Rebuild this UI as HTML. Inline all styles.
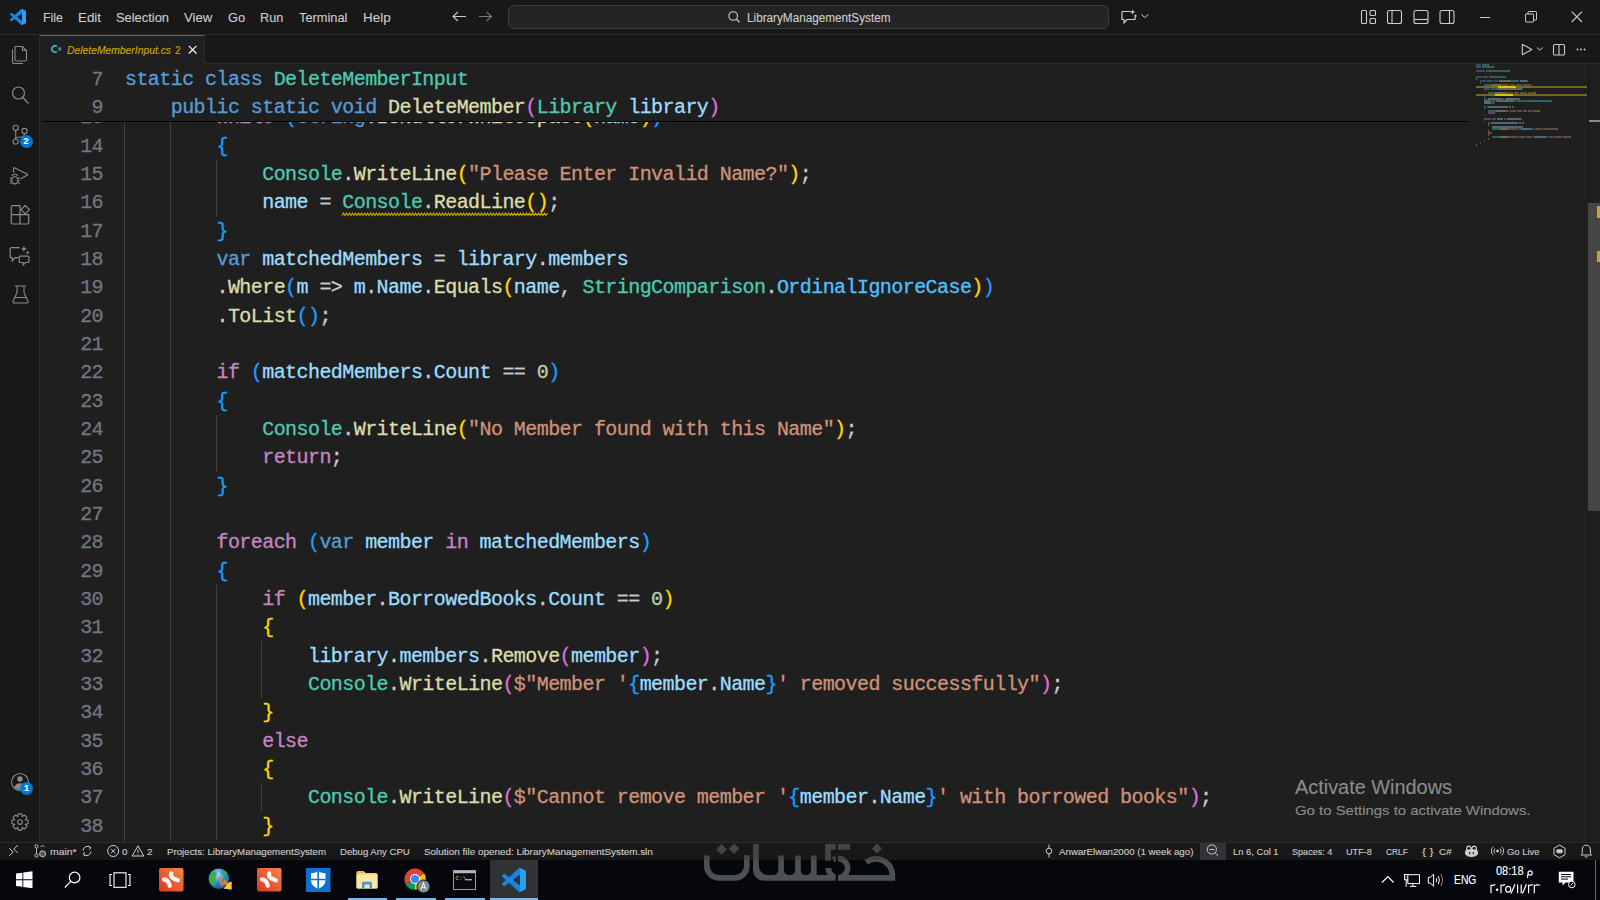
<!DOCTYPE html>
<html><head><meta charset="utf-8">
<style>
*{margin:0;padding:0;box-sizing:border-box}
html,body{width:1600px;height:900px;overflow:hidden;background:#1f1f1f}
body{position:relative;font-family:"Liberation Sans",sans-serif;color:#cccccc}
.a{position:absolute}
#editor{left:40px;top:64px;width:1560px;height:778px;background:#1f1f1f}
.code{font-family:"Liberation Mono",monospace;font-size:20px;letter-spacing:-0.565px;line-height:28.333px;white-space:pre;-webkit-text-stroke:0.32px currentColor}
.ln{font-family:"Liberation Mono",monospace;font-size:20px;letter-spacing:-0.565px;line-height:28.333px;color:#6e7681;text-align:right;width:60px;-webkit-text-stroke:0.32px currentColor}
.k{color:#569cd6}.c{color:#c586c0}.t{color:#4ec9b0}.f{color:#dcdcaa}.v{color:#9cdcfe}.s{color:#ce9178}.n{color:#b5cea8}.p{color:#cccccc}.e{color:#4fc1ff}
.b1{color:#ffd700}.b2{color:#da70d6}.b3{color:#179fff}
.guide{width:1px;background:#404040}
.ui{font-family:"Liberation Sans",sans-serif;white-space:pre;-webkit-text-stroke:0.12px currentColor}
svg{position:absolute;overflow:visible}
</style></head><body>
<div class="a" style="left:40px;top:64px;width:1560px;height:778px;background:#1f1f1f"></div>
<div class="a guide" style="left:124.00px;top:103.00px;height:28.73px;background:#404040"></div>
<div class="a guide" style="left:170.00px;top:103.00px;height:28.73px;background:#404040"></div>
<div class="a guide" style="left:124.00px;top:131.33px;height:28.73px;background:#404040"></div>
<div class="a guide" style="left:170.00px;top:131.33px;height:28.73px;background:#404040"></div>
<div class="a guide" style="left:124.00px;top:159.66px;height:28.73px;background:#404040"></div>
<div class="a guide" style="left:170.00px;top:159.66px;height:28.73px;background:#404040"></div>
<div class="a guide" style="left:216.00px;top:159.66px;height:28.73px;background:#404040"></div>
<div class="a guide" style="left:124.00px;top:188.00px;height:28.73px;background:#404040"></div>
<div class="a guide" style="left:170.00px;top:188.00px;height:28.73px;background:#404040"></div>
<div class="a guide" style="left:216.00px;top:188.00px;height:28.73px;background:#404040"></div>
<div class="a guide" style="left:124.00px;top:216.33px;height:28.73px;background:#404040"></div>
<div class="a guide" style="left:170.00px;top:216.33px;height:28.73px;background:#404040"></div>
<div class="a guide" style="left:124.00px;top:244.66px;height:28.73px;background:#404040"></div>
<div class="a guide" style="left:170.00px;top:244.66px;height:28.73px;background:#404040"></div>
<div class="a guide" style="left:124.00px;top:273.00px;height:28.73px;background:#404040"></div>
<div class="a guide" style="left:170.00px;top:273.00px;height:28.73px;background:#404040"></div>
<div class="a guide" style="left:124.00px;top:301.33px;height:28.73px;background:#404040"></div>
<div class="a guide" style="left:170.00px;top:301.33px;height:28.73px;background:#404040"></div>
<div class="a guide" style="left:124.00px;top:329.66px;height:28.73px;background:#404040"></div>
<div class="a guide" style="left:170.00px;top:329.66px;height:28.73px;background:#404040"></div>
<div class="a guide" style="left:124.00px;top:358.00px;height:28.73px;background:#404040"></div>
<div class="a guide" style="left:170.00px;top:358.00px;height:28.73px;background:#404040"></div>
<div class="a guide" style="left:124.00px;top:386.33px;height:28.73px;background:#404040"></div>
<div class="a guide" style="left:170.00px;top:386.33px;height:28.73px;background:#404040"></div>
<div class="a guide" style="left:124.00px;top:414.66px;height:28.73px;background:#404040"></div>
<div class="a guide" style="left:170.00px;top:414.66px;height:28.73px;background:#404040"></div>
<div class="a guide" style="left:216.00px;top:414.66px;height:28.73px;background:#404040"></div>
<div class="a guide" style="left:124.00px;top:443.00px;height:28.73px;background:#404040"></div>
<div class="a guide" style="left:170.00px;top:443.00px;height:28.73px;background:#404040"></div>
<div class="a guide" style="left:216.00px;top:443.00px;height:28.73px;background:#404040"></div>
<div class="a guide" style="left:124.00px;top:471.33px;height:28.73px;background:#404040"></div>
<div class="a guide" style="left:170.00px;top:471.33px;height:28.73px;background:#404040"></div>
<div class="a guide" style="left:124.00px;top:499.66px;height:28.73px;background:#404040"></div>
<div class="a guide" style="left:170.00px;top:499.66px;height:28.73px;background:#404040"></div>
<div class="a guide" style="left:124.00px;top:528.00px;height:28.73px;background:#404040"></div>
<div class="a guide" style="left:170.00px;top:528.00px;height:28.73px;background:#404040"></div>
<div class="a guide" style="left:124.00px;top:556.33px;height:28.73px;background:#404040"></div>
<div class="a guide" style="left:170.00px;top:556.33px;height:28.73px;background:#404040"></div>
<div class="a guide" style="left:124.00px;top:584.66px;height:28.73px;background:#404040"></div>
<div class="a guide" style="left:170.00px;top:584.66px;height:28.73px;background:#404040"></div>
<div class="a guide" style="left:216.00px;top:584.66px;height:28.73px;background:#404040"></div>
<div class="a guide" style="left:124.00px;top:613.00px;height:28.73px;background:#404040"></div>
<div class="a guide" style="left:170.00px;top:613.00px;height:28.73px;background:#404040"></div>
<div class="a guide" style="left:216.00px;top:613.00px;height:28.73px;background:#404040"></div>
<div class="a guide" style="left:124.00px;top:641.33px;height:28.73px;background:#404040"></div>
<div class="a guide" style="left:170.00px;top:641.33px;height:28.73px;background:#404040"></div>
<div class="a guide" style="left:216.00px;top:641.33px;height:28.73px;background:#404040"></div>
<div class="a guide" style="left:261.00px;top:641.33px;height:28.73px;background:#404040"></div>
<div class="a guide" style="left:124.00px;top:669.66px;height:28.73px;background:#404040"></div>
<div class="a guide" style="left:170.00px;top:669.66px;height:28.73px;background:#404040"></div>
<div class="a guide" style="left:216.00px;top:669.66px;height:28.73px;background:#404040"></div>
<div class="a guide" style="left:261.00px;top:669.66px;height:28.73px;background:#404040"></div>
<div class="a guide" style="left:124.00px;top:698.00px;height:28.73px;background:#404040"></div>
<div class="a guide" style="left:170.00px;top:698.00px;height:28.73px;background:#404040"></div>
<div class="a guide" style="left:216.00px;top:698.00px;height:28.73px;background:#404040"></div>
<div class="a guide" style="left:124.00px;top:726.33px;height:28.73px;background:#404040"></div>
<div class="a guide" style="left:170.00px;top:726.33px;height:28.73px;background:#404040"></div>
<div class="a guide" style="left:216.00px;top:726.33px;height:28.73px;background:#404040"></div>
<div class="a guide" style="left:124.00px;top:754.66px;height:28.73px;background:#404040"></div>
<div class="a guide" style="left:170.00px;top:754.66px;height:28.73px;background:#404040"></div>
<div class="a guide" style="left:216.00px;top:754.66px;height:28.73px;background:#404040"></div>
<div class="a guide" style="left:124.00px;top:783.00px;height:28.73px;background:#404040"></div>
<div class="a guide" style="left:170.00px;top:783.00px;height:28.73px;background:#404040"></div>
<div class="a guide" style="left:216.00px;top:783.00px;height:28.73px;background:#404040"></div>
<div class="a guide" style="left:261.00px;top:783.00px;height:28.73px;background:#404040"></div>
<div class="a guide" style="left:124.00px;top:811.33px;height:28.73px;background:#404040"></div>
<div class="a guide" style="left:170.00px;top:811.33px;height:28.73px;background:#404040"></div>
<div class="a guide" style="left:216.00px;top:811.33px;height:28.73px;background:#404040"></div>
<div class="a guide" style="left:124.00px;top:839.66px;height:28.73px;background:#404040"></div>
<div class="a guide" style="left:170.00px;top:839.66px;height:28.73px;background:#404040"></div>
<div class="a code" style="left:216.48px;top:104.30px"><span class="c">while</span><span class="p"> </span><span class="b3">(</span><span class="k">string</span><span class="p">.</span><span class="f">IsNullOrWhiteSpace</span><span class="b1">(</span><span class="v">name</span><span class="b1">)</span><span class="b3">)</span></div>
<div class="a ln" style="left:43px;top:104.30px">13</div>
<div class="a code" style="left:216.48px;top:132.63px"><span class="b3">{</span></div>
<div class="a ln" style="left:43px;top:132.63px">14</div>
<div class="a code" style="left:262.22px;top:160.96px"><span class="t">Console</span><span class="p">.</span><span class="f">WriteLine</span><span class="b1">(</span><span class="s">"Please Enter Invalid Name?"</span><span class="b1">)</span><span class="p">;</span></div>
<div class="a ln" style="left:43px;top:160.96px">15</div>
<div class="a code" style="left:262.22px;top:189.30px"><span class="v">name</span><span class="p"> = </span><span class="t">Console</span><span class="p">.</span><span class="f">ReadLine</span><span class="b1">()</span><span class="p">;</span></div>
<div class="a ln" style="left:43px;top:189.30px">16</div>
<div class="a code" style="left:216.48px;top:217.63px"><span class="b3">}</span></div>
<div class="a ln" style="left:43px;top:217.63px">17</div>
<div class="a code" style="left:216.48px;top:245.96px"><span class="k">var</span><span class="p"> </span><span class="v">matchedMembers</span><span class="p"> = </span><span class="v">library</span><span class="p">.</span><span class="v">members</span></div>
<div class="a ln" style="left:43px;top:245.96px">18</div>
<div class="a code" style="left:216.48px;top:274.30px"><span class="p">.</span><span class="f">Where</span><span class="b3">(</span><span class="v">m</span><span class="p"> =&gt; </span><span class="v">m</span><span class="p">.</span><span class="v">Name</span><span class="p">.</span><span class="f">Equals</span><span class="b1">(</span><span class="v">name</span><span class="p">, </span><span class="t">StringComparison</span><span class="p">.</span><span class="e">OrdinalIgnoreCase</span><span class="b1">)</span><span class="b3">)</span></div>
<div class="a ln" style="left:43px;top:274.30px">19</div>
<div class="a code" style="left:216.48px;top:302.63px"><span class="p">.</span><span class="f">ToList</span><span class="b3">()</span><span class="p">;</span></div>
<div class="a ln" style="left:43px;top:302.63px">20</div>
<div class="a code" style="left:216.48px;top:330.96px"></div>
<div class="a ln" style="left:43px;top:330.96px">21</div>
<div class="a code" style="left:216.48px;top:359.30px"><span class="c">if</span><span class="p"> </span><span class="b3">(</span><span class="v">matchedMembers</span><span class="p">.</span><span class="v">Count</span><span class="p"> == </span><span class="n">0</span><span class="b3">)</span></div>
<div class="a ln" style="left:43px;top:359.30px">22</div>
<div class="a code" style="left:216.48px;top:387.63px"><span class="b3">{</span></div>
<div class="a ln" style="left:43px;top:387.63px">23</div>
<div class="a code" style="left:262.22px;top:415.96px"><span class="t">Console</span><span class="p">.</span><span class="f">WriteLine</span><span class="b1">(</span><span class="s">"No Member found with this Name"</span><span class="b1">)</span><span class="p">;</span></div>
<div class="a ln" style="left:43px;top:415.96px">24</div>
<div class="a code" style="left:262.22px;top:444.30px"><span class="c">return</span><span class="p">;</span></div>
<div class="a ln" style="left:43px;top:444.30px">25</div>
<div class="a code" style="left:216.48px;top:472.63px"><span class="b3">}</span></div>
<div class="a ln" style="left:43px;top:472.63px">26</div>
<div class="a code" style="left:216.48px;top:500.96px"></div>
<div class="a ln" style="left:43px;top:500.96px">27</div>
<div class="a code" style="left:216.48px;top:529.30px"><span class="c">foreach</span><span class="p"> </span><span class="b3">(</span><span class="k">var</span><span class="p"> </span><span class="v">member</span><span class="p"> </span><span class="c">in</span><span class="p"> </span><span class="v">matchedMembers</span><span class="b3">)</span></div>
<div class="a ln" style="left:43px;top:529.30px">28</div>
<div class="a code" style="left:216.48px;top:557.63px"><span class="b3">{</span></div>
<div class="a ln" style="left:43px;top:557.63px">29</div>
<div class="a code" style="left:262.22px;top:585.96px"><span class="c">if</span><span class="p"> </span><span class="b1">(</span><span class="v">member</span><span class="p">.</span><span class="v">BorrowedBooks</span><span class="p">.</span><span class="v">Count</span><span class="p"> == </span><span class="n">0</span><span class="b1">)</span></div>
<div class="a ln" style="left:43px;top:585.96px">30</div>
<div class="a code" style="left:262.22px;top:614.30px"><span class="b1">{</span></div>
<div class="a ln" style="left:43px;top:614.30px">31</div>
<div class="a code" style="left:307.96px;top:642.63px"><span class="v">library</span><span class="p">.</span><span class="v">members</span><span class="p">.</span><span class="f">Remove</span><span class="b2">(</span><span class="v">member</span><span class="b2">)</span><span class="p">;</span></div>
<div class="a ln" style="left:43px;top:642.63px">32</div>
<div class="a code" style="left:307.96px;top:670.96px"><span class="t">Console</span><span class="p">.</span><span class="f">WriteLine</span><span class="b2">(</span><span class="s">$"Member '</span><span class="b3">{</span><span class="v">member</span><span class="p">.</span><span class="v">Name</span><span class="b3">}</span><span class="s">' removed successfully"</span><span class="b2">)</span><span class="p">;</span></div>
<div class="a ln" style="left:43px;top:670.96px">33</div>
<div class="a code" style="left:262.22px;top:699.30px"><span class="b1">}</span></div>
<div class="a ln" style="left:43px;top:699.30px">34</div>
<div class="a code" style="left:262.22px;top:727.63px"><span class="c">else</span></div>
<div class="a ln" style="left:43px;top:727.63px">35</div>
<div class="a code" style="left:262.22px;top:755.96px"><span class="b1">{</span></div>
<div class="a ln" style="left:43px;top:755.96px">36</div>
<div class="a code" style="left:307.96px;top:784.30px"><span class="t">Console</span><span class="p">.</span><span class="f">WriteLine</span><span class="b2">(</span><span class="s">$"Cannot remove member '</span><span class="b3">{</span><span class="v">member</span><span class="p">.</span><span class="v">Name</span><span class="b3">}</span><span class="s">' with borrowed books"</span><span class="b2">)</span><span class="p">;</span></div>
<div class="a ln" style="left:43px;top:784.30px">37</div>
<div class="a code" style="left:262.22px;top:812.63px"><span class="b1">}</span></div>
<div class="a ln" style="left:43px;top:812.63px">38</div>
<div class="a code" style="left:216.48px;top:840.96px"><span class="b3">}</span></div>
<div class="a ln" style="left:43px;top:840.96px">39</div>
<svg style="left:341.5px;top:211.80px" width="206" height="5"><path d="M0 3.5 L1.5 1 L3.0 3.5 L4.5 1 L6.0 3.5 L7.5 1 L9.0 3.5 L10.5 1 L12.0 3.5 L13.5 1 L15.0 3.5 L16.5 1 L18.0 3.5 L19.5 1 L21.0 3.5 L22.5 1 L24.0 3.5 L25.5 1 L27.0 3.5 L28.5 1 L30.0 3.5 L31.5 1 L33.0 3.5 L34.5 1 L36.0 3.5 L37.5 1 L39.0 3.5 L40.5 1 L42.0 3.5 L43.5 1 L45.0 3.5 L46.5 1 L48.0 3.5 L49.5 1 L51.0 3.5 L52.5 1 L54.0 3.5 L55.5 1 L57.0 3.5 L58.5 1 L60.0 3.5 L61.5 1 L63.0 3.5 L64.5 1 L66.0 3.5 L67.5 1 L69.0 3.5 L70.5 1 L72.0 3.5 L73.5 1 L75.0 3.5 L76.5 1 L78.0 3.5 L79.5 1 L81.0 3.5 L82.5 1 L84.0 3.5 L85.5 1 L87.0 3.5 L88.5 1 L90.0 3.5 L91.5 1 L93.0 3.5 L94.5 1 L96.0 3.5 L97.5 1 L99.0 3.5 L100.5 1 L102.0 3.5 L103.5 1 L105.0 3.5 L106.5 1 L108.0 3.5 L109.5 1 L111.0 3.5 L112.5 1 L114.0 3.5 L115.5 1 L117.0 3.5 L118.5 1 L120.0 3.5 L121.5 1 L123.0 3.5 L124.5 1 L126.0 3.5 L127.5 1 L129.0 3.5 L130.5 1 L132.0 3.5 L133.5 1 L135.0 3.5 L136.5 1 L138.0 3.5 L139.5 1 L141.0 3.5 L142.5 1 L144.0 3.5 L145.5 1 L147.0 3.5 L148.5 1 L150.0 3.5 L151.5 1 L153.0 3.5 L154.5 1 L156.0 3.5 L157.5 1 L159.0 3.5 L160.5 1 L162.0 3.5 L163.5 1 L165.0 3.5 L166.5 1 L168.0 3.5 L169.5 1 L171.0 3.5 L172.5 1 L174.0 3.5 L175.5 1 L177.0 3.5 L178.5 1 L180.0 3.5 L181.5 1 L183.0 3.5 L184.5 1 L186.0 3.5 L187.5 1 L189.0 3.5 L190.5 1 L192.0 3.5 L193.5 1 L195.0 3.5 L196.5 1 L198.0 3.5 L199.5 1 L201.0 3.5 L202.5 1 L204.0 3.5 L205.5 1" fill="none" stroke="#cca700" stroke-width="1.1"/></svg>
<div class="a" style="left:40px;top:64px;width:1436px;height:56.67px;background:#1f1f1f"></div>
<div class="a code" style="left:125px;top:66.10px"><span class="k">static</span> <span class="k">class</span> <span class="t">DeleteMemberInput</span></div>
<div class="a ln" style="left:43px;top:66.10px">7</div>
<div class="a code" style="left:170.74px;top:93.63px"><span class="k">public</span> <span class="k">static</span> <span class="k">void</span> <span class="f">DeleteMember</span><span class="b2">(</span><span class="t">Library</span> <span class="v">library</span><span class="b2">)</span></div>
<div class="a ln" style="left:43px;top:93.63px">9</div>
<div class="a" style="left:42px;top:120.67px;width:1426px;height:1.6px;background:#000"></div>
<div class="a" style="left:1476px;top:64.3px;width:5px;height:1.4px;background:#569cd6;opacity:0.38"></div>
<div class="a" style="left:1482px;top:64.3px;width:6px;height:1.4px;background:#4ec9b0;opacity:0.38"></div>
<div class="a" style="left:1488px;top:64.3px;width:1px;height:1.4px;background:#cccccc;opacity:0.38"></div>
<div class="a" style="left:1476px;top:66.3px;width:5px;height:1.4px;background:#569cd6;opacity:0.38"></div>
<div class="a" style="left:1482px;top:66.3px;width:6px;height:1.4px;background:#4ec9b0;opacity:0.38"></div>
<div class="a" style="left:1488px;top:66.3px;width:1px;height:1.4px;background:#cccccc;opacity:0.38"></div>
<div class="a" style="left:1489px;top:66.3px;width:4px;height:1.4px;background:#4ec9b0;opacity:0.38"></div>
<div class="a" style="left:1493px;top:66.3px;width:1px;height:1.4px;background:#cccccc;opacity:0.38"></div>
<div class="a" style="left:1476px;top:70.3px;width:9px;height:1.4px;background:#569cd6;opacity:0.38"></div>
<div class="a" style="left:1486px;top:70.3px;width:23px;height:1.4px;background:#4ec9b0;opacity:0.38"></div>
<div class="a" style="left:1509px;top:70.3px;width:1px;height:1.4px;background:#cccccc;opacity:0.38"></div>
<div class="a" style="left:1476px;top:76.3px;width:6px;height:1.4px;background:#569cd6;opacity:0.38"></div>
<div class="a" style="left:1483px;top:76.3px;width:5px;height:1.4px;background:#569cd6;opacity:0.38"></div>
<div class="a" style="left:1489px;top:76.3px;width:17px;height:1.4px;background:#4ec9b0;opacity:0.38"></div>
<div class="a" style="left:1476px;top:78.3px;width:1px;height:1.4px;background:#ffd700;opacity:0.38"></div>
<div class="a" style="left:1480px;top:80.3px;width:6px;height:1.4px;background:#569cd6;opacity:0.38"></div>
<div class="a" style="left:1487px;top:80.3px;width:6px;height:1.4px;background:#569cd6;opacity:0.38"></div>
<div class="a" style="left:1494px;top:80.3px;width:4px;height:1.4px;background:#569cd6;opacity:0.38"></div>
<div class="a" style="left:1499px;top:80.3px;width:12px;height:1.4px;background:#dcdcaa;opacity:0.38"></div>
<div class="a" style="left:1511px;top:80.3px;width:1px;height:1.4px;background:#da70d6;opacity:0.38"></div>
<div class="a" style="left:1512px;top:80.3px;width:7px;height:1.4px;background:#4ec9b0;opacity:0.38"></div>
<div class="a" style="left:1520px;top:80.3px;width:7px;height:1.4px;background:#9cdcfe;opacity:0.38"></div>
<div class="a" style="left:1527px;top:80.3px;width:1px;height:1.4px;background:#da70d6;opacity:0.38"></div>
<div class="a" style="left:1480px;top:82.3px;width:1px;height:1.4px;background:#da70d6;opacity:0.38"></div>
<div class="a" style="left:1484px;top:84.3px;width:7px;height:1.4px;background:#4ec9b0;opacity:0.38"></div>
<div class="a" style="left:1491px;top:84.3px;width:1px;height:1.4px;background:#cccccc;opacity:0.38"></div>
<div class="a" style="left:1492px;top:84.3px;width:9px;height:1.4px;background:#dcdcaa;opacity:0.38"></div>
<div class="a" style="left:1501px;top:84.3px;width:1px;height:1.4px;background:#179fff;opacity:0.38"></div>
<div class="a" style="left:1502px;top:84.3px;width:7px;height:1.4px;background:#ce9178;opacity:0.38"></div>
<div class="a" style="left:1510px;top:84.3px;width:5px;height:1.4px;background:#ce9178;opacity:0.38"></div>
<div class="a" style="left:1516px;top:84.3px;width:6px;height:1.4px;background:#ce9178;opacity:0.38"></div>
<div class="a" style="left:1523px;top:84.3px;width:6px;height:1.4px;background:#ce9178;opacity:0.38"></div>
<div class="a" style="left:1529px;top:84.3px;width:1px;height:1.4px;background:#179fff;opacity:0.38"></div>
<div class="a" style="left:1530px;top:84.3px;width:1px;height:1.4px;background:#cccccc;opacity:0.38"></div>
<div class="a" style="left:1484px;top:86.3px;width:6px;height:1.4px;background:#569cd6;opacity:0.38"></div>
<div class="a" style="left:1491px;top:86.3px;width:4px;height:1.4px;background:#9cdcfe;opacity:0.38"></div>
<div class="a" style="left:1496px;top:86.3px;width:1px;height:1.4px;background:#cccccc;opacity:0.38"></div>
<div class="a" style="left:1498px;top:86.3px;width:7px;height:1.4px;background:#4ec9b0;opacity:0.38"></div>
<div class="a" style="left:1505px;top:86.3px;width:1px;height:1.4px;background:#cccccc;opacity:0.38"></div>
<div class="a" style="left:1506px;top:86.3px;width:8px;height:1.4px;background:#dcdcaa;opacity:0.38"></div>
<div class="a" style="left:1514px;top:86.3px;width:2px;height:1.4px;background:#179fff;opacity:0.38"></div>
<div class="a" style="left:1516px;top:86.3px;width:1px;height:1.4px;background:#cccccc;opacity:0.38"></div>
<div class="a" style="left:1484px;top:88.3px;width:5px;height:1.4px;background:#c586c0;opacity:0.38"></div>
<div class="a" style="left:1490px;top:88.3px;width:1px;height:1.4px;background:#179fff;opacity:0.38"></div>
<div class="a" style="left:1491px;top:88.3px;width:6px;height:1.4px;background:#569cd6;opacity:0.38"></div>
<div class="a" style="left:1497px;top:88.3px;width:1px;height:1.4px;background:#cccccc;opacity:0.38"></div>
<div class="a" style="left:1498px;top:88.3px;width:18px;height:1.4px;background:#dcdcaa;opacity:0.38"></div>
<div class="a" style="left:1516px;top:88.3px;width:1px;height:1.4px;background:#ffd700;opacity:0.38"></div>
<div class="a" style="left:1517px;top:88.3px;width:4px;height:1.4px;background:#9cdcfe;opacity:0.38"></div>
<div class="a" style="left:1521px;top:88.3px;width:1px;height:1.4px;background:#ffd700;opacity:0.38"></div>
<div class="a" style="left:1522px;top:88.3px;width:1px;height:1.4px;background:#179fff;opacity:0.38"></div>
<div class="a" style="left:1484px;top:90.3px;width:1px;height:1.4px;background:#179fff;opacity:0.38"></div>
<div class="a" style="left:1488px;top:92.3px;width:7px;height:1.4px;background:#4ec9b0;opacity:0.38"></div>
<div class="a" style="left:1495px;top:92.3px;width:1px;height:1.4px;background:#cccccc;opacity:0.38"></div>
<div class="a" style="left:1496px;top:92.3px;width:9px;height:1.4px;background:#dcdcaa;opacity:0.38"></div>
<div class="a" style="left:1505px;top:92.3px;width:1px;height:1.4px;background:#ffd700;opacity:0.38"></div>
<div class="a" style="left:1506px;top:92.3px;width:7px;height:1.4px;background:#ce9178;opacity:0.38"></div>
<div class="a" style="left:1514px;top:92.3px;width:5px;height:1.4px;background:#ce9178;opacity:0.38"></div>
<div class="a" style="left:1520px;top:92.3px;width:7px;height:1.4px;background:#ce9178;opacity:0.38"></div>
<div class="a" style="left:1528px;top:92.3px;width:6px;height:1.4px;background:#ce9178;opacity:0.38"></div>
<div class="a" style="left:1534px;top:92.3px;width:1px;height:1.4px;background:#ffd700;opacity:0.38"></div>
<div class="a" style="left:1535px;top:92.3px;width:1px;height:1.4px;background:#cccccc;opacity:0.38"></div>
<div class="a" style="left:1488px;top:94.3px;width:4px;height:1.4px;background:#9cdcfe;opacity:0.38"></div>
<div class="a" style="left:1493px;top:94.3px;width:1px;height:1.4px;background:#cccccc;opacity:0.38"></div>
<div class="a" style="left:1495px;top:94.3px;width:7px;height:1.4px;background:#4ec9b0;opacity:0.38"></div>
<div class="a" style="left:1502px;top:94.3px;width:1px;height:1.4px;background:#cccccc;opacity:0.38"></div>
<div class="a" style="left:1503px;top:94.3px;width:8px;height:1.4px;background:#dcdcaa;opacity:0.38"></div>
<div class="a" style="left:1511px;top:94.3px;width:2px;height:1.4px;background:#ffd700;opacity:0.38"></div>
<div class="a" style="left:1513px;top:94.3px;width:1px;height:1.4px;background:#cccccc;opacity:0.38"></div>
<div class="a" style="left:1484px;top:96.3px;width:1px;height:1.4px;background:#179fff;opacity:0.38"></div>
<div class="a" style="left:1484px;top:98.3px;width:3px;height:1.4px;background:#569cd6;opacity:0.38"></div>
<div class="a" style="left:1488px;top:98.3px;width:14px;height:1.4px;background:#9cdcfe;opacity:0.38"></div>
<div class="a" style="left:1503px;top:98.3px;width:1px;height:1.4px;background:#cccccc;opacity:0.38"></div>
<div class="a" style="left:1505px;top:98.3px;width:7px;height:1.4px;background:#9cdcfe;opacity:0.38"></div>
<div class="a" style="left:1512px;top:98.3px;width:1px;height:1.4px;background:#cccccc;opacity:0.38"></div>
<div class="a" style="left:1513px;top:98.3px;width:7px;height:1.4px;background:#9cdcfe;opacity:0.38"></div>
<div class="a" style="left:1484px;top:100.3px;width:1px;height:1.4px;background:#cccccc;opacity:0.38"></div>
<div class="a" style="left:1485px;top:100.3px;width:5px;height:1.4px;background:#dcdcaa;opacity:0.38"></div>
<div class="a" style="left:1490px;top:100.3px;width:1px;height:1.4px;background:#179fff;opacity:0.38"></div>
<div class="a" style="left:1491px;top:100.3px;width:1px;height:1.4px;background:#9cdcfe;opacity:0.38"></div>
<div class="a" style="left:1493px;top:100.3px;width:2px;height:1.4px;background:#cccccc;opacity:0.38"></div>
<div class="a" style="left:1496px;top:100.3px;width:1px;height:1.4px;background:#9cdcfe;opacity:0.38"></div>
<div class="a" style="left:1497px;top:100.3px;width:1px;height:1.4px;background:#cccccc;opacity:0.38"></div>
<div class="a" style="left:1498px;top:100.3px;width:4px;height:1.4px;background:#9cdcfe;opacity:0.38"></div>
<div class="a" style="left:1502px;top:100.3px;width:1px;height:1.4px;background:#cccccc;opacity:0.38"></div>
<div class="a" style="left:1503px;top:100.3px;width:6px;height:1.4px;background:#dcdcaa;opacity:0.38"></div>
<div class="a" style="left:1509px;top:100.3px;width:1px;height:1.4px;background:#ffd700;opacity:0.38"></div>
<div class="a" style="left:1510px;top:100.3px;width:4px;height:1.4px;background:#9cdcfe;opacity:0.38"></div>
<div class="a" style="left:1514px;top:100.3px;width:1px;height:1.4px;background:#cccccc;opacity:0.38"></div>
<div class="a" style="left:1516px;top:100.3px;width:16px;height:1.4px;background:#4ec9b0;opacity:0.38"></div>
<div class="a" style="left:1532px;top:100.3px;width:1px;height:1.4px;background:#cccccc;opacity:0.38"></div>
<div class="a" style="left:1533px;top:100.3px;width:17px;height:1.4px;background:#4fc1ff;opacity:0.38"></div>
<div class="a" style="left:1550px;top:100.3px;width:1px;height:1.4px;background:#ffd700;opacity:0.38"></div>
<div class="a" style="left:1551px;top:100.3px;width:1px;height:1.4px;background:#179fff;opacity:0.38"></div>
<div class="a" style="left:1484px;top:102.3px;width:1px;height:1.4px;background:#cccccc;opacity:0.38"></div>
<div class="a" style="left:1485px;top:102.3px;width:6px;height:1.4px;background:#dcdcaa;opacity:0.38"></div>
<div class="a" style="left:1491px;top:102.3px;width:2px;height:1.4px;background:#179fff;opacity:0.38"></div>
<div class="a" style="left:1493px;top:102.3px;width:1px;height:1.4px;background:#cccccc;opacity:0.38"></div>
<div class="a" style="left:1484px;top:106.3px;width:2px;height:1.4px;background:#c586c0;opacity:0.38"></div>
<div class="a" style="left:1487px;top:106.3px;width:1px;height:1.4px;background:#179fff;opacity:0.38"></div>
<div class="a" style="left:1488px;top:106.3px;width:14px;height:1.4px;background:#9cdcfe;opacity:0.38"></div>
<div class="a" style="left:1502px;top:106.3px;width:1px;height:1.4px;background:#cccccc;opacity:0.38"></div>
<div class="a" style="left:1503px;top:106.3px;width:5px;height:1.4px;background:#9cdcfe;opacity:0.38"></div>
<div class="a" style="left:1509px;top:106.3px;width:2px;height:1.4px;background:#cccccc;opacity:0.38"></div>
<div class="a" style="left:1512px;top:106.3px;width:1px;height:1.4px;background:#b5cea8;opacity:0.38"></div>
<div class="a" style="left:1513px;top:106.3px;width:1px;height:1.4px;background:#179fff;opacity:0.38"></div>
<div class="a" style="left:1484px;top:108.3px;width:1px;height:1.4px;background:#179fff;opacity:0.38"></div>
<div class="a" style="left:1488px;top:110.3px;width:7px;height:1.4px;background:#4ec9b0;opacity:0.38"></div>
<div class="a" style="left:1495px;top:110.3px;width:1px;height:1.4px;background:#cccccc;opacity:0.38"></div>
<div class="a" style="left:1496px;top:110.3px;width:9px;height:1.4px;background:#dcdcaa;opacity:0.38"></div>
<div class="a" style="left:1505px;top:110.3px;width:1px;height:1.4px;background:#ffd700;opacity:0.38"></div>
<div class="a" style="left:1506px;top:110.3px;width:3px;height:1.4px;background:#ce9178;opacity:0.38"></div>
<div class="a" style="left:1510px;top:110.3px;width:6px;height:1.4px;background:#ce9178;opacity:0.38"></div>
<div class="a" style="left:1517px;top:110.3px;width:5px;height:1.4px;background:#ce9178;opacity:0.38"></div>
<div class="a" style="left:1523px;top:110.3px;width:4px;height:1.4px;background:#ce9178;opacity:0.38"></div>
<div class="a" style="left:1528px;top:110.3px;width:4px;height:1.4px;background:#ce9178;opacity:0.38"></div>
<div class="a" style="left:1533px;top:110.3px;width:5px;height:1.4px;background:#ce9178;opacity:0.38"></div>
<div class="a" style="left:1538px;top:110.3px;width:1px;height:1.4px;background:#ffd700;opacity:0.38"></div>
<div class="a" style="left:1539px;top:110.3px;width:1px;height:1.4px;background:#cccccc;opacity:0.38"></div>
<div class="a" style="left:1488px;top:112.3px;width:6px;height:1.4px;background:#c586c0;opacity:0.38"></div>
<div class="a" style="left:1494px;top:112.3px;width:1px;height:1.4px;background:#cccccc;opacity:0.38"></div>
<div class="a" style="left:1484px;top:114.3px;width:1px;height:1.4px;background:#179fff;opacity:0.38"></div>
<div class="a" style="left:1484px;top:118.3px;width:7px;height:1.4px;background:#c586c0;opacity:0.38"></div>
<div class="a" style="left:1492px;top:118.3px;width:1px;height:1.4px;background:#179fff;opacity:0.38"></div>
<div class="a" style="left:1493px;top:118.3px;width:3px;height:1.4px;background:#569cd6;opacity:0.38"></div>
<div class="a" style="left:1497px;top:118.3px;width:6px;height:1.4px;background:#9cdcfe;opacity:0.38"></div>
<div class="a" style="left:1504px;top:118.3px;width:2px;height:1.4px;background:#c586c0;opacity:0.38"></div>
<div class="a" style="left:1507px;top:118.3px;width:14px;height:1.4px;background:#9cdcfe;opacity:0.38"></div>
<div class="a" style="left:1521px;top:118.3px;width:1px;height:1.4px;background:#179fff;opacity:0.38"></div>
<div class="a" style="left:1484px;top:120.3px;width:1px;height:1.4px;background:#179fff;opacity:0.38"></div>
<div class="a" style="left:1488px;top:122.3px;width:2px;height:1.4px;background:#c586c0;opacity:0.38"></div>
<div class="a" style="left:1491px;top:122.3px;width:1px;height:1.4px;background:#ffd700;opacity:0.38"></div>
<div class="a" style="left:1492px;top:122.3px;width:6px;height:1.4px;background:#9cdcfe;opacity:0.38"></div>
<div class="a" style="left:1498px;top:122.3px;width:1px;height:1.4px;background:#cccccc;opacity:0.38"></div>
<div class="a" style="left:1499px;top:122.3px;width:13px;height:1.4px;background:#9cdcfe;opacity:0.38"></div>
<div class="a" style="left:1512px;top:122.3px;width:1px;height:1.4px;background:#cccccc;opacity:0.38"></div>
<div class="a" style="left:1513px;top:122.3px;width:5px;height:1.4px;background:#9cdcfe;opacity:0.38"></div>
<div class="a" style="left:1519px;top:122.3px;width:2px;height:1.4px;background:#cccccc;opacity:0.38"></div>
<div class="a" style="left:1522px;top:122.3px;width:1px;height:1.4px;background:#b5cea8;opacity:0.38"></div>
<div class="a" style="left:1523px;top:122.3px;width:1px;height:1.4px;background:#ffd700;opacity:0.38"></div>
<div class="a" style="left:1488px;top:124.3px;width:1px;height:1.4px;background:#ffd700;opacity:0.38"></div>
<div class="a" style="left:1492px;top:126.3px;width:7px;height:1.4px;background:#9cdcfe;opacity:0.38"></div>
<div class="a" style="left:1499px;top:126.3px;width:1px;height:1.4px;background:#cccccc;opacity:0.38"></div>
<div class="a" style="left:1500px;top:126.3px;width:7px;height:1.4px;background:#9cdcfe;opacity:0.38"></div>
<div class="a" style="left:1507px;top:126.3px;width:1px;height:1.4px;background:#cccccc;opacity:0.38"></div>
<div class="a" style="left:1508px;top:126.3px;width:6px;height:1.4px;background:#dcdcaa;opacity:0.38"></div>
<div class="a" style="left:1514px;top:126.3px;width:1px;height:1.4px;background:#da70d6;opacity:0.38"></div>
<div class="a" style="left:1515px;top:126.3px;width:6px;height:1.4px;background:#9cdcfe;opacity:0.38"></div>
<div class="a" style="left:1521px;top:126.3px;width:1px;height:1.4px;background:#da70d6;opacity:0.38"></div>
<div class="a" style="left:1522px;top:126.3px;width:1px;height:1.4px;background:#cccccc;opacity:0.38"></div>
<div class="a" style="left:1492px;top:128.3px;width:7px;height:1.4px;background:#4ec9b0;opacity:0.38"></div>
<div class="a" style="left:1499px;top:128.3px;width:1px;height:1.4px;background:#cccccc;opacity:0.38"></div>
<div class="a" style="left:1500px;top:128.3px;width:9px;height:1.4px;background:#dcdcaa;opacity:0.38"></div>
<div class="a" style="left:1509px;top:128.3px;width:1px;height:1.4px;background:#da70d6;opacity:0.38"></div>
<div class="a" style="left:1510px;top:128.3px;width:8px;height:1.4px;background:#ce9178;opacity:0.38"></div>
<div class="a" style="left:1519px;top:128.3px;width:1px;height:1.4px;background:#ce9178;opacity:0.38"></div>
<div class="a" style="left:1520px;top:128.3px;width:1px;height:1.4px;background:#179fff;opacity:0.38"></div>
<div class="a" style="left:1521px;top:128.3px;width:6px;height:1.4px;background:#9cdcfe;opacity:0.38"></div>
<div class="a" style="left:1527px;top:128.3px;width:1px;height:1.4px;background:#cccccc;opacity:0.38"></div>
<div class="a" style="left:1528px;top:128.3px;width:4px;height:1.4px;background:#9cdcfe;opacity:0.38"></div>
<div class="a" style="left:1532px;top:128.3px;width:1px;height:1.4px;background:#179fff;opacity:0.38"></div>
<div class="a" style="left:1533px;top:128.3px;width:1px;height:1.4px;background:#ce9178;opacity:0.38"></div>
<div class="a" style="left:1535px;top:128.3px;width:7px;height:1.4px;background:#ce9178;opacity:0.38"></div>
<div class="a" style="left:1543px;top:128.3px;width:13px;height:1.4px;background:#ce9178;opacity:0.38"></div>
<div class="a" style="left:1556px;top:128.3px;width:1px;height:1.4px;background:#da70d6;opacity:0.38"></div>
<div class="a" style="left:1557px;top:128.3px;width:1px;height:1.4px;background:#cccccc;opacity:0.38"></div>
<div class="a" style="left:1488px;top:130.3px;width:1px;height:1.4px;background:#ffd700;opacity:0.38"></div>
<div class="a" style="left:1488px;top:132.3px;width:4px;height:1.4px;background:#c586c0;opacity:0.38"></div>
<div class="a" style="left:1488px;top:134.3px;width:1px;height:1.4px;background:#ffd700;opacity:0.38"></div>
<div class="a" style="left:1492px;top:136.3px;width:7px;height:1.4px;background:#4ec9b0;opacity:0.38"></div>
<div class="a" style="left:1499px;top:136.3px;width:1px;height:1.4px;background:#cccccc;opacity:0.38"></div>
<div class="a" style="left:1500px;top:136.3px;width:9px;height:1.4px;background:#dcdcaa;opacity:0.38"></div>
<div class="a" style="left:1509px;top:136.3px;width:1px;height:1.4px;background:#da70d6;opacity:0.38"></div>
<div class="a" style="left:1510px;top:136.3px;width:8px;height:1.4px;background:#ce9178;opacity:0.38"></div>
<div class="a" style="left:1519px;top:136.3px;width:6px;height:1.4px;background:#ce9178;opacity:0.38"></div>
<div class="a" style="left:1526px;top:136.3px;width:6px;height:1.4px;background:#ce9178;opacity:0.38"></div>
<div class="a" style="left:1533px;top:136.3px;width:1px;height:1.4px;background:#ce9178;opacity:0.38"></div>
<div class="a" style="left:1534px;top:136.3px;width:1px;height:1.4px;background:#179fff;opacity:0.38"></div>
<div class="a" style="left:1535px;top:136.3px;width:6px;height:1.4px;background:#9cdcfe;opacity:0.38"></div>
<div class="a" style="left:1541px;top:136.3px;width:1px;height:1.4px;background:#cccccc;opacity:0.38"></div>
<div class="a" style="left:1542px;top:136.3px;width:4px;height:1.4px;background:#9cdcfe;opacity:0.38"></div>
<div class="a" style="left:1546px;top:136.3px;width:1px;height:1.4px;background:#179fff;opacity:0.38"></div>
<div class="a" style="left:1547px;top:136.3px;width:1px;height:1.4px;background:#ce9178;opacity:0.38"></div>
<div class="a" style="left:1549px;top:136.3px;width:4px;height:1.4px;background:#ce9178;opacity:0.38"></div>
<div class="a" style="left:1554px;top:136.3px;width:8px;height:1.4px;background:#ce9178;opacity:0.38"></div>
<div class="a" style="left:1563px;top:136.3px;width:6px;height:1.4px;background:#ce9178;opacity:0.38"></div>
<div class="a" style="left:1569px;top:136.3px;width:1px;height:1.4px;background:#da70d6;opacity:0.38"></div>
<div class="a" style="left:1570px;top:136.3px;width:1px;height:1.4px;background:#cccccc;opacity:0.38"></div>
<div class="a" style="left:1488px;top:138.3px;width:1px;height:1.4px;background:#ffd700;opacity:0.38"></div>
<div class="a" style="left:1484px;top:140.3px;width:1px;height:1.4px;background:#179fff;opacity:0.38"></div>
<div class="a" style="left:1480px;top:142.3px;width:1px;height:1.4px;background:#da70d6;opacity:0.38"></div>
<div class="a" style="left:1476px;top:144.3px;width:1px;height:1.4px;background:#ffd700;opacity:0.38"></div>
<div class="a" style="left:1476px;top:86px;width:111px;height:2px;background:#7d6a1c;opacity:0.95"></div>
<div class="a" style="left:1498px;top:86px;width:18px;height:2px;background:#e0c000"></div>
<div class="a" style="left:1476px;top:94px;width:111px;height:2px;background:#7d6a1c;opacity:0.95"></div>
<div class="a" style="left:1495px;top:94px;width:18px;height:2px;background:#e0c000"></div>
<div class="a" style="left:1588px;top:64px;width:1px;height:778px;background:#141414"></div>
<div class="a" style="left:1588px;top:203px;width:12px;height:308px;background:#454545"></div>
<div class="a" style="left:1597px;top:206px;width:3px;height:12px;background:#c9a22c"></div>
<div class="a" style="left:1597px;top:251px;width:3px;height:11px;background:#c9a22c"></div>
<div class="a" style="left:1589px;top:120px;width:11px;height:1.5px;background:#8a8a8a"></div>
<div class="a" style="left:0;top:0;width:1600px;height:34px;background:#181818"></div>
<div class="a" style="left:0;top:34px;width:1600px;height:1px;background:#2b2b2b"></div>
<svg style="left:10px;top:9px" width="16" height="16" viewBox="0 0 100 100"><path fill="#1585e6" d="M96.46 10.8L75.86.87a6.23 6.23 0 0 0-7.1 1.2L29.35 38.04 12.19 25.01a4.16 4.16 0 0 0-5.32.24L1.36 30.26a4.16 4.16 0 0 0 0 6.16L16.25 50 1.36 63.58a4.16 4.16 0 0 0 0 6.16l5.5 5.01a4.16 4.16 0 0 0 5.32.24l17.16-13.03 39.41 35.97a6.23 6.23 0 0 0 7.1 1.2l20.6-9.92A6.25 6.25 0 0 0 100 83.6V16.42a6.25 6.25 0 0 0-3.54-5.63zM75.02 72.7L45.11 50l29.91-22.7v45.4z"/><path fill="#26a3ff" d="M75.86.87l20.6 9.93A6.25 6.25 0 0 1 100 16.42V83.6a6.25 6.25 0 0 1-3.54 5.63l-20.6 9.92a6.23 6.23 0 0 1-7.1-1.2c2.3 2.3 6.24.67 6.24-2.59V4.66c0-3.26-3.93-4.9-6.24-2.59a6.23 6.23 0 0 1 7.1-1.2z"/><path fill="#1a8ee0" d="M1.36 63.58L16.25 50 1.36 36.42a4.16 4.16 0 0 1 0-6.16l5.5-5.01a4.16 4.16 0 0 1 5.32-.24L75.02 72.7v22.88L12.19 75L6.86 74.75l-5.5-5.01a4.16 4.16 0 0 1 0-6.16z" opacity="0"/></svg>
<svg style="left:452px;top:11px" width="16" height="12"><path d="M1 5.5H14M6 0.8L1 5.5L6 10.2" fill="none" stroke="#cccccc" stroke-width="1.1"/></svg>
<svg style="left:478px;top:11px" width="16" height="12"><path d="M1 5.5H13.5M8.5 0.8L13.5 5.5L8.5 10.2" fill="none" stroke="#7a7a7a" stroke-width="1.1"/></svg>
<div class="a" style="left:507.5px;top:5px;width:601px;height:24px;background:#242424;border:1px solid #3d3d3d;border-radius:6px"></div>
<svg style="left:727px;top:11px" width="14" height="12"><circle cx="6.2" cy="5" r="4.3" fill="none" stroke="#cccccc" stroke-width="1.1"/><path d="M9.2 8L12.5 11.2" stroke="#cccccc" stroke-width="1.2"/></svg>
<svg style="left:1120px;top:8px" width="30" height="17"><path d="M2 3.5H10.5M15 9V11.5H7L4 15V11.5H2V3.5" fill="none" stroke="#cccccc" stroke-width="1.2"/><path d="M12.6 1.2L13.4 3.2L15.4 4L13.4 4.8L12.6 6.8L11.8 4.8L9.8 4L11.8 3.2Z" fill="#cccccc"/><path d="M15.5 6L16.1 7.3L17.4 7.9L16.1 8.5L15.5 9.8L14.9 8.5L13.6 7.9L14.9 7.3Z" fill="#cccccc"/><path d="M21.3 6.5L24.8 9.5L28.3 6.5" fill="none" stroke="#cccccc" stroke-width="1"/></svg>
<svg style="left:1360px;top:9px" width="100" height="17" fill="none" stroke="#cccccc" stroke-width="1.1"><rect x="1.5" y="1.5" width="5" height="13" rx="1"/><rect x="10" y="1.5" width="5.5" height="5" rx="1"/><rect x="10" y="9.5" width="5.5" height="5" rx="1"/><rect x="27.5" y="1.5" width="14" height="13" rx="2"/><path d="M32 1.5V14.5"/><rect x="54" y="1.5" width="14" height="13" rx="2"/><path d="M54 10.5H68"/><rect x="80" y="1.5" width="14" height="13" rx="2"/><path d="M89.5 1.5V14.5"/></svg>
<div class="a" style="left:1480px;top:17px;width:10px;height:1px;background:#cccccc"></div>
<svg style="left:1525px;top:11px" width="13" height="12" fill="none" stroke="#cccccc" stroke-width="1"><rect x="0.5" y="3" width="8" height="8" rx="0.5"/><path d="M3 3V1.2Q3 0.5 3.7 0.5H10.8Q11.5 0.5 11.5 1.2V8.3Q11.5 9 10.8 9H8.5"/></svg>
<svg style="left:1571px;top:11px" width="12" height="12"><path d="M0.7 0.7L11 11M11 0.7L0.7 11" stroke="#cccccc" stroke-width="1.1"/></svg>
<div class="a" style="left:0;top:35px;width:39px;height:807px;background:#181818"></div>
<div class="a" style="left:39px;top:35px;width:1px;height:807px;background:#2b2b2b"></div>
<svg style="left:11px;top:45px" width="18" height="20" fill="none" stroke="#8a8a8a" stroke-width="1.1"><path d="M4 1.5H11.5L15.5 5.5V14.5Q15.5 16 14 16H5.5Q4 16 4 14.5Z"/><path d="M11.5 1.5V5.5H15.5"/><path d="M1.5 4.5V16.5Q1.5 18.5 3.5 18.5H12"/></svg>
<svg style="left:10px;top:85px" width="20" height="20" fill="none" stroke="#8a8a8a" stroke-width="1.2"><circle cx="8.5" cy="8" r="6"/><path d="M12.8 12.5L18.5 18.5"/></svg>
<svg style="left:11px;top:124px" width="20" height="22" fill="none" stroke="#8a8a8a" stroke-width="1.1"><circle cx="4.7" cy="3.8" r="2.6"/><circle cx="4.7" cy="17.6" r="2.6"/><circle cx="13.5" cy="7" r="2.6"/><path d="M4.7 6.4V15M13.5 9.6Q13.5 13.3 9 13.3H4.7"/></svg>
<div class="a" style="left:19.5px;top:134.5px;width:13.5px;height:13.5px;border-radius:50%;background:#0078d4"></div>
<svg style="left:9px;top:166px" width="22" height="21" fill="none" stroke="#8a8a8a" stroke-width="1.1"><path d="M4.6 6.5V2.3Q4.6 1.4 5.4 1.8L18.4 8.3Q19.1 8.7 18.4 9.1L11.5 13"/><path d="M3.2 10Q3.2 8.3 5.8 8.3Q8.4 8.3 8.4 10"/><ellipse cx="5.8" cy="14.3" rx="3" ry="3.6"/><path d="M0.8 11.8L2.8 12.6M0.8 14.5H2.8M0.8 17.5L2.8 16.5M10.8 11.8L8.8 12.6M10.8 14.5H8.8M10.8 17.5L8.8 16.5"/></svg>
<svg style="left:10px;top:204px" width="21" height="21" fill="none" stroke="#8a8a8a" stroke-width="1.2"><path d="M2.7 1.6H10V10.6H18.7V18.6Q18.7 20 17.3 20H2.7Q1.3 20 1.3 18.6V3Q1.3 1.6 2.7 1.6ZM1.3 10.6H10V20"/><path d="M15.2 1.4L19.4 5.6L15.2 9.8L11 5.6Z" stroke-linejoin="round"/></svg>
<svg style="left:9px;top:245px" width="22" height="21" fill="none" stroke="#8a8a8a" stroke-width="1.2"><path d="M10.5 2.6H2.2Q1.2 2.6 1.2 3.6V11.6Q1.2 12.6 2.2 12.6H3.3V16L6.3 12.6H9.5"/><path d="M11.2 11.2H19Q20 11.2 20 12.2V16.5Q20 17.5 19 17.5H16.3L14.3 19.8V17.5H11.2Q10.2 17.5 10.2 16.5V12.2Q10.2 11.2 11.2 11.2Z"/><path d="M14.9 0.6L15.8 2.9L18.1 3.8L15.8 4.7L14.9 7L14 4.7L11.7 3.8L14 2.9Z" fill="#8a8a8a" stroke="none"/><path d="M18.6 5.5L19.2 7L20.7 7.6L19.2 8.2L18.6 9.7L18 8.2L16.5 7.6L18 7Z" fill="#8a8a8a" stroke="none"/></svg>
<svg style="left:12px;top:285px" width="17" height="20" fill="none" stroke="#8a8a8a" stroke-width="1.1"><path d="M3 1H14M5 1V7.5L1 16.5Q0.8 18 2.5 18H14.5Q16.2 18 16 16.5L12 7.5V1M3 12.5H14"/></svg>
<svg style="left:10px;top:772px" width="20" height="20"><circle cx="10" cy="10" r="8.5" fill="none" stroke="#8a8a8a" stroke-width="1.1"/><circle cx="10" cy="7" r="2.7" fill="#8a8a8a"/><path d="M4.5 15.5Q5 11.5 10 11.3Q15 11.5 15.5 15.5Q13 17.8 10 17.8Q7 17.8 4.5 15.5Z" fill="#8a8a8a"/></svg>
<div class="a" style="left:20px;top:781.8px;width:13px;height:13px;border-radius:50%;background:#0078d4"></div>
<svg style="left:10px;top:812px" width="20" height="20" fill="none" stroke="#8a8a8a" stroke-width="1.1"><polygon points="18.10,8.19 18.10,11.81 15.30,12.37 15.42,12.07 17.01,14.45 14.45,17.01 12.07,15.42 12.37,15.30 11.81,18.10 8.19,18.10 7.63,15.30 7.93,15.42 5.55,17.01 2.99,14.45 4.58,12.07 4.70,12.37 1.90,11.81 1.90,8.19 4.70,7.63 4.58,7.93 2.99,5.55 5.55,2.99 7.93,4.58 7.63,4.70 8.19,1.90 11.81,1.90 12.37,4.70 12.07,4.58 14.45,2.99 17.01,5.55 15.42,7.93 15.30,7.63" stroke-linejoin="round"/><circle cx="10" cy="10" r="2.3"/></svg>
<div class="a" style="left:40px;top:35px;width:1560px;height:28px;background:#181818"></div>
<div class="a" style="left:204px;top:63px;width:1396px;height:1px;background:#2b2b2b"></div>
<div class="a" style="left:40px;top:35px;width:164px;height:29px;background:#1f1f1f;border-top:1px solid #0078d4"></div>
<div class="a" style="left:204px;top:35px;width:1px;height:28px;background:#2b2b2b"></div>
<svg style="left:51px;top:45px" width="12" height="10"><path d="M5.99 1.63A3.1 3.1 0 1 0 5.99 6.37" fill="none" stroke="#519aba" stroke-width="1.9"/><path d="M8 2.2V5.8M9.5 2.2V5.8M7.2 3.3H10.3M7.2 4.8H10.3" stroke="#519aba" stroke-width="0.7"/></svg>
<svg style="left:188px;top:45px" width="10" height="10"><path d="M0.8 0.8L8.5 8.5M8.5 0.8L0.8 8.5" stroke="#ffffff" stroke-width="1.1"/></svg>
<svg style="left:1520px;top:43px" width="70" height="14" fill="none" stroke="#cccccc" stroke-width="1.1"><path d="M2.3 1.3L11.8 6.5L2.3 11.7Z" stroke-linejoin="round"/><path d="M16.8 4.5L19.8 7.2L22.8 4.5" stroke-width="1"/><rect x="33.5" y="1.5" width="11" height="10.5" rx="1.3"/><path d="M39 1.5V12"/></svg>
<svg style="left:1575px;top:48px" width="12" height="3"><circle cx="2.5" cy="1.5" r="0.9" fill="#cccccc"/><circle cx="6" cy="1.5" r="0.9" fill="#cccccc"/><circle cx="9.6" cy="1.5" r="0.9" fill="#cccccc"/></svg>
<div class="a" style="left:0;top:842px;width:1600px;height:18px;background:#181818;border-top:1px solid #2b2b2b"></div>
<svg style="left:8px;top:844px" width="12" height="14" fill="none" stroke="#cccccc" stroke-width="1"><path d="M1.2 4.2L5.2 8L1.2 11.8M9.8 1.2L5.8 5L9.8 8.8"/></svg>
<svg style="left:34px;top:844px" width="14" height="14" fill="none" stroke="#cccccc" stroke-width="0.9"><circle cx="2.5" cy="2.3" r="1.6"/><circle cx="2.5" cy="11.5" r="1.6"/><path d="M2.5 3.9V9.9"/><circle cx="8.6" cy="9.8" r="3" fill="#cccccc" fill-opacity="0.35"/><path d="M6.5 3.2L8.5 1.2L10.5 3.2"/></svg>
<svg style="left:81px;top:844px" width="12" height="14" fill="none" stroke="#cccccc" stroke-width="1"><path d="M9.5 3.5A4.5 4.5 0 0 0 2 6.5M2.5 10.5A4.5 4.5 0 0 0 10 7.5"/><path d="M7.5 2.2L9.8 3.6L8.4 5.8M4.5 11.8L2.2 10.4L3.6 8.2"/></svg>
<svg style="left:107px;top:844.5px" width="40" height="12" fill="none" stroke="#cccccc" stroke-width="1"><circle cx="6.2" cy="6" r="5.5"/><path d="M4 3.8L8.4 8.2M8.4 3.8L4 8.2"/><path d="M31 0.8L36.8 11H25.2Z" stroke-linejoin="round"/><path d="M31 4.5V7.8M31 9V9.8"/></svg>
<svg style="left:1044px;top:844px" width="10" height="14" fill="none" stroke="#cccccc" stroke-width="1"><circle cx="5" cy="7" r="2.8"/><path d="M5 0.5V4.2M5 9.8V13.5"/></svg>
<div class="a" style="left:1200px;top:843px;width:26px;height:17px;background:#313336"></div>
<svg style="left:1206px;top:844px" width="13" height="13" fill="none" stroke="#cccccc" stroke-width="1"><circle cx="5.8" cy="5.5" r="4.6"/><path d="M3.5 5.5H8.1M9.2 9L12 11.8"/></svg>
<svg style="left:1464px;top:844px" width="15" height="14"><path d="M2 6Q1.5 2 4.5 1.6Q6.8 1.3 7.5 3.5Q8.2 1.3 10.5 1.6Q13.5 2 13 6L14 7.5V10Q12 13 7.5 13Q3 13 1 10V7.5Z" fill="#cccccc"/><ellipse cx="4.8" cy="4.2" rx="1.6" ry="1.3" fill="#181818"/><ellipse cx="10.2" cy="4.2" rx="1.6" ry="1.3" fill="#181818"/><rect x="5.2" y="8" width="1.1" height="2.2" fill="#181818"/><rect x="8.7" y="8" width="1.1" height="2.2" fill="#181818"/></svg>
<svg style="left:1491px;top:844px" width="14" height="14" fill="none" stroke="#cccccc" stroke-width="0.9"><circle cx="6.5" cy="7" r="1" fill="#cccccc"/><path d="M4 4.5A3.5 3.5 0 0 0 4 9.5M9 4.5A3.5 3.5 0 0 1 9 9.5M2.2 2.7A6 6 0 0 0 2.2 11.3M10.8 2.7A6 6 0 0 1 10.8 11.3"/></svg>
<svg style="left:1553px;top:843.5px" width="14" height="15" fill="none" stroke="#cccccc" stroke-width="1"><path d="M6.5 1L12 4.2V10.6L6.5 13.8L1 10.6V4.2Z"/><rect x="3.8" y="5.8" width="5.4" height="3" rx="0.8" fill="#cccccc"/></svg>
<svg style="left:1580px;top:844px" width="13" height="14" fill="none" stroke="#cccccc" stroke-width="1"><path d="M6.3 1.2Q2.2 1.4 2.2 6V9.5L1 11H11.6L10.4 9.5V6Q10.4 1.4 6.3 1.2ZM4.8 12.5Q6.3 14 7.8 12.5"/></svg>
<div class="a ui" style="left:42.90px;top:10.99px;font-size:13px;line-height:13px;color:#cccccc;transform:scaleX(0.9548);transform-origin:0 0;">File</div>
<div class="a ui" style="left:77.90px;top:10.99px;font-size:13px;line-height:13px;color:#cccccc;transform:scaleX(1.0267);transform-origin:0 0;">Edit</div>
<div class="a ui" style="left:115.90px;top:10.99px;font-size:13px;line-height:13px;color:#cccccc;transform:scaleX(0.9910);transform-origin:0 0;">Selection</div>
<div class="a ui" style="left:184.30px;top:10.99px;font-size:13px;line-height:13px;color:#cccccc;transform:scaleX(1.0128);transform-origin:0 0;">View</div>
<div class="a ui" style="left:227.90px;top:10.99px;font-size:13px;line-height:13px;color:#cccccc;transform:scaleX(0.9803);transform-origin:0 0;">Go</div>
<div class="a ui" style="left:260.40px;top:10.99px;font-size:13px;line-height:13px;color:#cccccc;transform:scaleX(0.9770);transform-origin:0 0;">Run</div>
<div class="a ui" style="left:299.20px;top:10.99px;font-size:13px;line-height:13px;color:#cccccc;transform:scaleX(0.9853);transform-origin:0 0;">Terminal</div>
<div class="a ui" style="left:363.10px;top:10.99px;font-size:13px;line-height:13px;color:#cccccc;transform:scaleX(1.0323);transform-origin:0 0;">Help</div>
<div class="a ui" style="left:746.50px;top:11.64px;font-size:12px;line-height:12px;color:#cccccc;transform:scaleX(0.9780);transform-origin:0 0;">LibraryManagementSystem</div>
<div class="a ui" style="left:23.60px;top:137.18px;font-size:9px;line-height:9px;color:#ffffff;font-weight:bold;">2</div>
<div class="a ui" style="left:24.00px;top:784.18px;font-size:9px;line-height:9px;color:#ffffff;font-weight:bold;">1</div>
<div class="a ui" style="left:66.60px;top:45.58px;font-size:10.3px;line-height:10.3px;color:#cca700;font-style:italic;transform:scaleX(1.0040);transform-origin:0 0;">DeleteMemberInput.cs</div>
<div class="a ui" style="left:175.20px;top:45.58px;font-size:10.3px;line-height:10.3px;color:#cca700;transform:scaleX(0.9779);transform-origin:0 0;">2</div>
<div class="a ui" style="left:49.50px;top:846.87px;font-size:9.6px;line-height:9.6px;color:#cccccc;transform:scaleX(1.0804);transform-origin:0 0;">main*</div>
<div class="a ui" style="left:122.30px;top:846.87px;font-size:9.6px;line-height:9.6px;color:#cccccc;transform:scaleX(1.0308);transform-origin:0 0;">0</div>
<div class="a ui" style="left:147.00px;top:846.87px;font-size:9.6px;line-height:9.6px;color:#cccccc;transform:scaleX(1.0308);transform-origin:0 0;">2</div>
<div class="a ui" style="left:166.50px;top:846.87px;font-size:9.6px;line-height:9.6px;color:#cccccc;transform:scaleX(1.0108);transform-origin:0 0;">Projects: LibraryManagementSystem</div>
<div class="a ui" style="left:339.50px;top:846.87px;font-size:9.6px;line-height:9.6px;color:#cccccc;transform:scaleX(0.9987);transform-origin:0 0;">Debug Any CPU</div>
<div class="a ui" style="left:423.50px;top:846.87px;font-size:9.6px;line-height:9.6px;color:#cccccc;transform:scaleX(1.0313);transform-origin:0 0;">Solution file opened: LibraryManagementSystem.sln</div>
<div class="a ui" style="left:1058.80px;top:846.87px;font-size:9.6px;line-height:9.6px;color:#cccccc;transform:scaleX(1.0121);transform-origin:0 0;">AnwarElwan2000 (1 week ago)</div>
<div class="a ui" style="left:1232.60px;top:846.87px;font-size:9.6px;line-height:9.6px;color:#cccccc;transform:scaleX(0.9828);transform-origin:0 0;">Ln 6, Col 1</div>
<div class="a ui" style="left:1292.20px;top:846.87px;font-size:9.6px;line-height:9.6px;color:#cccccc;transform:scaleX(0.9469);transform-origin:0 0;">Spaces: 4</div>
<div class="a ui" style="left:1346.30px;top:846.87px;font-size:9.6px;line-height:9.6px;color:#cccccc;transform:scaleX(0.9529);transform-origin:0 0;">UTF-8</div>
<div class="a ui" style="left:1385.70px;top:846.87px;font-size:9.6px;line-height:9.6px;color:#cccccc;transform:scaleX(0.8742);transform-origin:0 0;">CRLF</div>
<div class="a ui" style="left:1421.50px;top:847.37px;font-size:9.6px;line-height:9.6px;color:#cccccc;transform:scaleX(1.2674);transform-origin:0 0;">{ }</div>
<div class="a ui" style="left:1439.00px;top:846.87px;font-size:9.6px;line-height:9.6px;color:#cccccc;transform:scaleX(1.0356);transform-origin:0 0;">C#</div>
<div class="a ui" style="left:1507.40px;top:846.87px;font-size:9.6px;line-height:9.6px;color:#cccccc;transform:scaleX(0.9800);transform-origin:0 0;">Go Live</div>
<div class="a ui" style="left:1295.00px;top:778.49px;font-size:19.5px;line-height:19.5px;color:#8b8b8b;transform:scaleX(1.0202);transform-origin:0 0;">Activate Windows</div>
<div class="a ui" style="left:1295.00px;top:803.89px;font-size:13.6px;line-height:13.6px;color:#8b8b8b;transform:scaleX(1.0975);transform-origin:0 0;">Go to Settings to activate Windows.</div>
<div class="a" style="left:0;top:860px;width:1600px;height:40px;background:#05070c"></div>
<svg style="left:15px;top:871px" width="19" height="18"><path d="M1 2.6L7.4 1.7V8.3H1ZM8.3 1.6L17.5 0.3V8.3H8.3ZM1 9.2H7.4V15.8L1 14.9ZM8.3 9.2H17.5V17.2L8.3 15.9Z" fill="#ffffff"/></svg>
<svg style="left:63px;top:870px" width="20" height="20" fill="none" stroke="#ffffff" stroke-width="1.2"><circle cx="11.6" cy="7.5" r="5.3"/><path d="M7.8 11.3L1.8 17.5"/></svg>
<svg style="left:109px;top:872px" width="23" height="17" fill="none" stroke="#ffffff" stroke-width="1.1"><rect x="5" y="0.8" width="12" height="14.5"/><path d="M3 2.5H1V13.5H3M19 2.5H21V13.5H19"/></svg>
<svg style="left:159px;top:868px" width="25" height="24"><defs><linearGradient id="og159" x1="0" y1="1" x2="1" y2="0"><stop offset="0" stop-color="#e2321b"/><stop offset="1" stop-color="#f08a4a"/></linearGradient></defs><rect x="0" y="0" width="24.5" height="23.5" rx="2" fill="url(#og159)"/><path d="M12.3 5.5Q10.3 9.5 18.8 12.3M5 11.3Q9.8 12 10.8 17.8" fill="none" stroke="#f4f4f4" stroke-width="4.2" stroke-linecap="round"/></svg>
<svg style="left:257px;top:868px" width="25" height="24"><defs><linearGradient id="og257" x1="0" y1="1" x2="1" y2="0"><stop offset="0" stop-color="#e2321b"/><stop offset="1" stop-color="#f08a4a"/></linearGradient></defs><rect x="0" y="0" width="24.5" height="23.5" rx="2" fill="url(#og257)"/><path d="M12.3 5.5Q10.3 9.5 18.8 12.3M5 11.3Q9.8 12 10.8 17.8" fill="none" stroke="#f4f4f4" stroke-width="4.2" stroke-linecap="round"/></svg>
<svg style="left:208px;top:868px" width="26" height="24"><defs><radialGradient id="gl" cx="0.45" cy="0.3" r="0.75"><stop offset="0" stop-color="#a8dcff"/><stop offset="0.5" stop-color="#2a8ad8"/><stop offset="1" stop-color="#0d5aa0"/></radialGradient></defs><circle cx="10.8" cy="10.8" r="10.3" fill="url(#gl)"/><path d="M1.5 9Q3 4 7 3.5Q9.5 5 8.5 8Q6.5 10 8 13Q8.5 16 6.5 18Q2 16 1 12Z" fill="#3fae3f"/><path d="M13 2Q17.5 2.5 19.5 6Q17.5 8 15 7Q12 5 13 2Z" fill="#3fae3f"/><path d="M18 9Q21 10 21 13Q19 12 18 9Z" fill="#2e8a35"/><path d="M10 9.5L12.5 9L14 14.5L17 11.5L20 15L23.5 13.5L23.5 21.5L15.5 20.5L18.5 18L16.5 16L13.5 18.5Z" fill="#f07a2a"/><path d="M18.5 18L20 15L23.5 13.5L23.5 21.5L15.5 20.5Z" fill="#ffcc33"/></svg>
<svg style="left:306px;top:868px" width="25" height="24"><rect width="24.5" height="24" fill="#0d72cf"/><path d="M12.2 3.5Q8 5.5 5 5.2V12Q5 18 12.2 21Q19.5 18 19.5 12V5.2Q16.5 5.5 12.2 3.5Z" fill="#ffffff"/><path d="M12.2 3.5V21M5 11.5H19.5" stroke="#0d72cf" stroke-width="1.6"/></svg>
<svg style="left:356px;top:870px" width="23" height="20"><path d="M0.5 2.5Q0.5 1 2 1H7.5L9.5 3H20Q21.5 3 21.5 4.5V17Q21.5 18.5 20 18.5H2Q0.5 18.5 0.5 17Z" fill="#f6d776"/><path d="M0.5 5H21.5V17Q21.5 18.5 20 18.5H2Q0.5 18.5 0.5 17Z" fill="#fbe6a2"/><path d="M6 18.5V13Q6 11.8 7.2 11.8H14.8Q16 11.8 16 13V18.5H13.5V14.5H8.5V18.5Z" fill="#3d9be9"/><rect x="1.5" y="1.5" width="5.5" height="1.5" fill="#e2b43c"/></svg>
<svg style="left:404px;top:868px" width="27" height="26"><path d="M11 11L1.65 16.4A10.8 10.8 0 0 1 20.35 5.6Z" fill="#db4437"/><path d="M11 11L20.35 5.6A10.8 10.8 0 0 1 11 21.8Z" fill="#f4c20d"/><path d="M11 11L11 21.8A10.8 10.8 0 0 1 1.65 16.4Z" fill="#0f9d58"/><circle cx="11" cy="11" r="5" fill="#ffffff"/><circle cx="11" cy="11" r="4" fill="#4285f4"/><circle cx="19.5" cy="18.5" r="6.5" fill="#7d8a92" stroke="#05070c" stroke-width="0.8"/><path d="M17 21.5L19.5 15L22 21.5M17.9 19.5H21.1" fill="none" stroke="#e8eef2" stroke-width="1.1"/></svg>
<svg style="left:453px;top:870px" width="23" height="20"><rect x="0.5" y="0.5" width="22" height="19" fill="#0a0a0a" stroke="#9a9a9a" stroke-width="1"/><rect x="1" y="1" width="21" height="2.2" fill="#b9b9b9"/><text x="2.5" y="10" font-family="Liberation Mono" font-size="6" fill="#d0d0d0">C:\</text><rect x="12" y="9.2" width="7" height="1.1" fill="#d0d0d0"/></svg>
<div class="a" style="left:490px;top:860px;width:48px;height:40px;background:#313234"></div>
<svg style="left:502px;top:868px" width="24" height="24" viewBox="0 0 100 100" preserveAspectRatio="none"><path fill="#1784e0" d="M96.46 10.8L75.86.87a6.23 6.23 0 0 0-7.1 1.2L29.35 38.04 12.19 25.01a4.16 4.16 0 0 0-5.32.24L1.36 30.26a4.16 4.16 0 0 0 0 6.16L16.25 50 1.36 63.58a4.16 4.16 0 0 0 0 6.16l5.5 5.01a4.16 4.16 0 0 0 5.32.24l17.16-13.03 39.41 35.97a6.23 6.23 0 0 0 7.1 1.2l20.6-9.92A6.25 6.25 0 0 0 100 83.6V16.42a6.25 6.25 0 0 0-3.54-5.63zM75.02 72.7L45.11 50l29.91-22.7v45.4z"/><path fill="#2a9ff0" d="M75.86.87l20.6 9.93A6.25 6.25 0 0 1 100 16.42V83.6a6.25 6.25 0 0 1-3.54 5.63l-20.6 9.92a6.23 6.23 0 0 1-7.1-1.2c2.3 2.3 6.24.67 6.24-2.59V4.66c0-3.26-3.93-4.9-6.24-2.59a6.23 6.23 0 0 1 7.1-1.2z"/></svg>
<div class="a" style="left:347.5px;top:898px;width:39.5px;height:2px;background:#76b9ed"></div>
<div class="a" style="left:396px;top:898px;width:40px;height:2px;background:#76b9ed"></div>
<div class="a" style="left:445px;top:898px;width:40px;height:2px;background:#76b9ed"></div>
<div class="a" style="left:490px;top:898px;width:48px;height:2px;background:#76b9ed"></div>
<svg style="left:700px;top:840px" width="200" height="45" viewBox="700 840 200 45"><defs><clipPath id="cst"><rect x="700" y="843" width="200" height="17"/></clipPath><clipPath id="ctb"><rect x="700" y="860" width="200" height="25"/></clipPath></defs><path d="M706.85 855.5V866A11.8 11.8 0 0 0 718.65 877.8H735A11.8 11.8 0 0 0 746.85 866V855.3 M755.9 844V866A11.8 11.8 0 0 0 767.7 877.8H894.8 M755.9 855.5V869.8A8 8 0 0 0 763.9 877.8H773.1A8 8 0 0 0 781.1 869.8V855.5 M781.1 855.5V870.3A7.5 7.5 0 0 0 788.6 877.8H790.5A7.5 7.5 0 0 0 798 870.3V855.5 M798 855.5V870.8A7 7 0 0 0 805 877.8H806.8A7 7 0 0 0 813.8 870.8V855.5 M813.8 855.5V877.8 M828 846.85H850M828 844V860.6 M833.2 859.7A9.6 9.6 0 1 1 828.4 868 M866.2 862.3A16.3 16.3 0 0 1 892.3 874.6V880.8" fill="none" stroke="#454545" stroke-width="5.7" clip-path="url(#cst)"/><path d="M721.6 844.1L726.9 849.4L721.6 854.7L716.3 849.4ZM734.1 843.45L739.4 848.75L734.1 854.05L728.8 848.75ZM876.9 843.4L881.9 848.4L876.9 853.4L871.9 848.4Z" fill="#454545" clip-path="url(#cst)"/><path d="M706.85 855.5V866A11.8 11.8 0 0 0 718.65 877.8H735A11.8 11.8 0 0 0 746.85 866V855.3 M755.9 844V866A11.8 11.8 0 0 0 767.7 877.8H894.8 M755.9 855.5V869.8A8 8 0 0 0 763.9 877.8H773.1A8 8 0 0 0 781.1 869.8V855.5 M781.1 855.5V870.3A7.5 7.5 0 0 0 788.6 877.8H790.5A7.5 7.5 0 0 0 798 870.3V855.5 M798 855.5V870.8A7 7 0 0 0 805 877.8H806.8A7 7 0 0 0 813.8 870.8V855.5 M813.8 855.5V877.8 M828 846.85H850M828 844V860.6 M833.2 859.7A9.6 9.6 0 1 1 828.4 868 M866.2 862.3A16.3 16.3 0 0 1 892.3 874.6V880.8" fill="none" stroke="#4c4f53" stroke-width="5.7" clip-path="url(#ctb)"/><path d="M721.6 844.1L726.9 849.4L721.6 854.7L716.3 849.4ZM734.1 843.45L739.4 848.75L734.1 854.05L728.8 848.75ZM876.9 843.4L881.9 848.4L876.9 853.4L871.9 848.4Z" fill="#4c4f53" clip-path="url(#ctb)"/><rect x="835.7" y="843" width="2.3" height="17" fill="#181818"/><rect x="835.7" y="860" width="2.3" height="22" fill="#05070c"/></svg>
<svg style="left:1381px;top:875px" width="14" height="9"><path d="M1 7.5L6.8 1.5L12.6 7.5" fill="none" stroke="#ffffff" stroke-width="1.1"/></svg>
<svg style="left:1403px;top:873px" width="19" height="16" fill="none" stroke="#ffffff" stroke-width="1"><rect x="1.6" y="1.5" width="3.2" height="5.3"/><path d="M2.4 3.6L3.2 4.3L4 3.6" stroke-width="0.7"/><path d="M4.8 1.7H16.5V10.6H4.8V6.8M3.2 6.8V13.8M9.8 10.6V13.3M7 13.4H13.3"/></svg>
<svg style="left:1427px;top:873px" width="19" height="15" fill="none" stroke="#ffffff" stroke-width="1"><path d="M1.3 4.3H3.3L6.6 1.3V13.1L3.3 10.1H1.3Z" stroke-linejoin="round"/><path d="M9.2 5.2Q10.4 7.2 9.2 9.2M11.3 3.2Q13.6 7.2 11.3 11.2"/><path d="M13.8 1.2Q17.2 7.2 13.8 13.2" stroke="#8a8a8a"/></svg>
<svg style="left:1525px;top:869px" width="10" height="10" fill="none" stroke="#ffffff" stroke-width="1.2"><circle cx="5.1" cy="4" r="2.1"/><path d="M3.3 5.2Q2.2 6.5 2.6 8.8"/></svg>
<svg style="left:1489px;top:883px" width="52" height="12" fill="none" stroke="#ffffff" stroke-width="1.2"><path d="M2 10.2V2.3Q4 2.7 6.3 1.5"/><circle cx="8.1" cy="6.7" r="1.3" fill="#ffffff" stroke="none"/><path d="M12 10.2V2.3Q14 2.7 16.2 1.5"/><ellipse cx="19.2" cy="6.3" rx="2.5" ry="2.9"/><path d="M26 1.3L22 10.5"/><path d="M28.6 1.6V10.2M32.2 1.6V10.2"/><path d="M37.5 1.3L33.4 10.5"/><path d="M39.6 10.2V2.3Q41.6 2.7 43.8 1.5"/><path d="M45.3 10.2V2.3Q46.6 2.9 47.9 1.6Q49.1 2.9 50.6 1.5"/></svg>
<svg style="left:1558px;top:871px" width="18" height="18"><path d="M0.8 0.8H15.5V11.5H7.5L4.5 14.5V11.5H0.8Z" fill="#ffffff"/><path d="M3 3.5H13M3 5.8H13M3 8.1H10" stroke="#05070c" stroke-width="1"/><circle cx="13.8" cy="13.5" r="3.3" fill="#05070c" stroke="#ffffff" stroke-width="1"/><path d="M12.5 14.5L15 12" stroke="#ffffff" stroke-width="1"/></svg>
<div class="a" style="left:1595px;top:860px;width:1px;height:40px;background:#6b6b6b"></div>
<div class="a ui" style="left:1454.30px;top:873.57px;font-size:12.2px;line-height:12.2px;color:#ffffff;transform:scaleX(0.8482);transform-origin:0 0;">ENG</div>
<div class="a ui" style="left:1496.20px;top:864.67px;font-size:12.2px;line-height:12.2px;color:#ffffff;transform:scaleX(0.9017);transform-origin:0 0;">08:18</div>
</body></html>
